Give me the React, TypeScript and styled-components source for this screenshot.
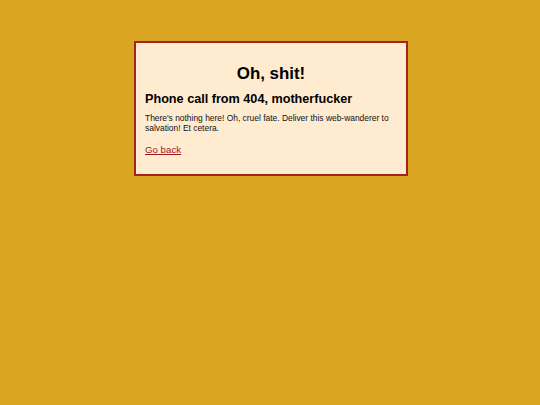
import React from "react";
import styled, { createGlobalStyle } from "styled-components";

const GlobalStyle = createGlobalStyle`
  html, body {
    margin: 0;
    padding: 0;
    background: #daa520;
  }
  body {
    min-height: 405px;
    font-family: "Liberation Sans", Arial, Helvetica, sans-serif;
    color: #111;
  }
`;

const Page = styled.main`
  display: flex;
  justify-content: center;
  padding: 41px 0 0 2px;
`;

const Card = styled.section`
  box-sizing: border-box;
  width: 274px;
  padding: 21px 9px 19px;
  background: #ffebcf;
  border: 2px solid #a3241c;
  display: flex;
  flex-direction: column;
`;

const Title = styled.h1`
  margin: 0;
  font-size: 16.9px;
  line-height: 19px;
  font-weight: 700;
  text-align: center;
  color: #000;
`;

const Subtitle = styled.h2`
  margin: 9px 0 0;
  font-size: 12.65px;
  line-height: 15px;
  font-weight: 700;
  color: #000;
`;

const Text = styled.p`
  margin: 6px 0 0;
  font-size: 8.44px;
  line-height: 10px;
`;

const Actions = styled.p`
  margin: 11px 0 0;
  font-size: 9.7px;
  line-height: 11px;
`;

const BackLink = styled.a`
  color: #a3161b;
  text-decoration: underline;
`;

export default function App() {
  return (
    <>
      <GlobalStyle />
      <Page>
        <Card>
          <Title>Oh, shit!</Title>
          <Subtitle>Phone call from 404, motherfucker</Subtitle>
          <Text>
            There's nothing here! Oh, cruel fate. Deliver this web-wanderer to
            salvation! Et cetera.
          </Text>
          <Actions>
            <BackLink href="#">Go back</BackLink>
          </Actions>
        </Card>
      </Page>
    </>
  );
}
